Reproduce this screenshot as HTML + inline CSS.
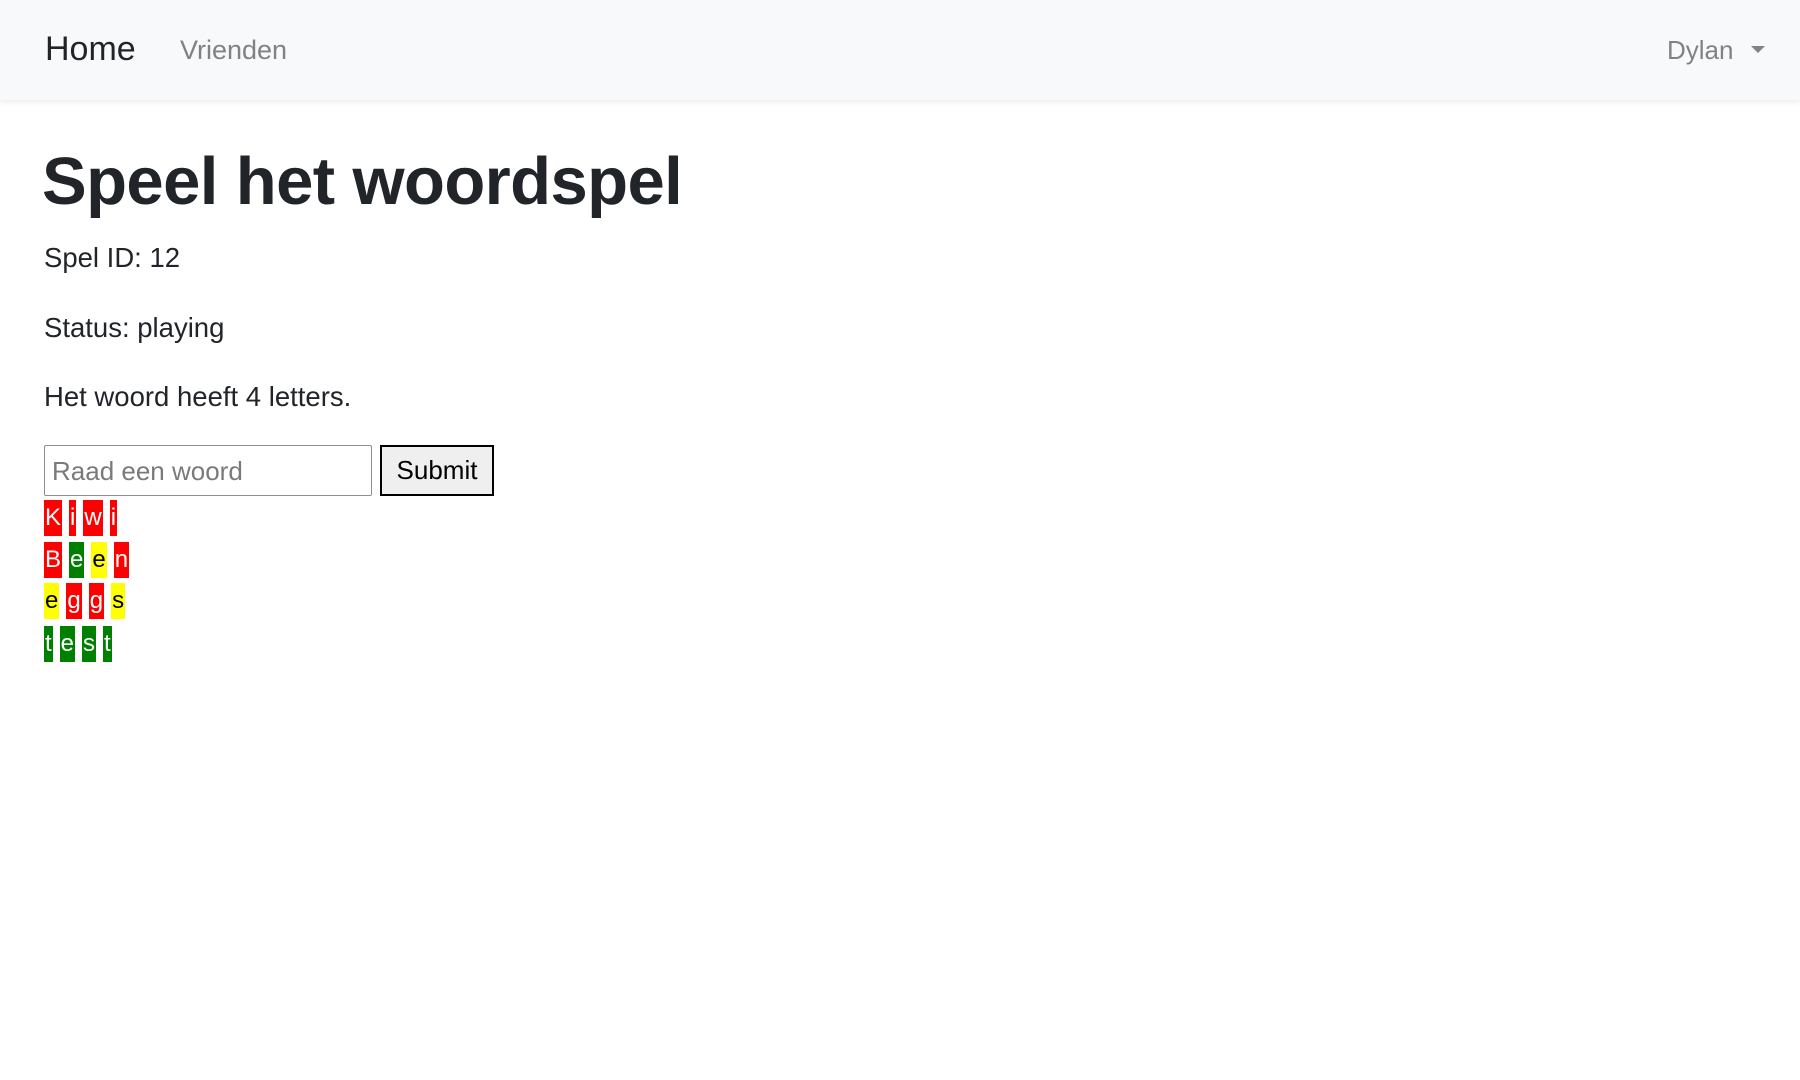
<!DOCTYPE html>
<html><head><meta charset="utf-8"><style>
*{box-sizing:border-box}
body{margin:0;width:1800px;height:1080px;background:#fff;font-family:"Liberation Sans",sans-serif;color:#212529;position:relative;overflow:hidden}
.nav{position:absolute;left:0;top:0;width:1800px;height:100px;background:#f8f9fa;box-shadow:0 2px 6px rgba(0,0,0,.08)}
.abs{position:absolute;white-space:nowrap}
.home{left:45px;top:30px;font-size:34px;color:#212529}
.vr{left:180px;top:35px;font-size:27px;color:#808285}
.dy{left:1667px;top:35px;font-size:26px;color:#808285}
.caret{position:absolute;left:1751px;top:46px;width:0;height:0;border-left:7px solid transparent;border-right:7px solid transparent;border-top:7px solid #808285}
h1{position:absolute;left:42px;top:142px;margin:0;font-size:67px;font-weight:bold;line-height:1.2;letter-spacing:-0.6px}
p{position:absolute;left:44px;margin:0;font-size:27.5px;line-height:30px}
.inp{position:absolute;left:44px;top:445px;width:328px;height:51px;border:1px solid #8f8f8f;border-radius:2px;font-size:26px;color:#7a7a7a;padding:10px 7px}
.btn{position:absolute;left:380px;top:445px;width:114px;height:51px;border:2px solid #000;background:#efefef;font-size:26px;text-align:center;line-height:47px;color:#000}
.row{position:absolute;left:44px;height:36px;font-size:24px;line-height:36px}
.row span{display:inline-block;height:36px;margin-right:7px;padding:0 1px}
.r{background:red;color:#fff}.g{background:green;color:#fff}.y{background:yellow;color:#000}
</style></head><body>
<div class="nav">
<div class="abs home">Home</div>
<div class="abs vr">Vrienden</div>
<div class="abs dy">Dylan</div>
<div class="caret"></div>
</div>
<h1>Speel het woordspel</h1>
<p style="top:243px">Spel ID: 12</p>
<p style="top:313px">Status: playing</p>
<p style="top:382px">Het woord heeft 4 letters.</p>
<div class="inp">Raad een woord</div>
<div class="btn">Submit</div>
<div class="row" style="top:500px"><span class="r">K</span><span class="r">i</span><span class="r">w</span><span class="r">i</span></div>
<div class="row" style="top:542px"><span class="r">B</span><span class="g">e</span><span class="y">e</span><span class="r">n</span></div>
<div class="row" style="top:583px"><span class="y">e</span><span class="r">g</span><span class="r">g</span><span class="y">s</span></div>
<div class="row" style="top:626px"><span class="g">t</span><span class="g">e</span><span class="g">s</span><span class="g">t</span></div>
</body></html>
